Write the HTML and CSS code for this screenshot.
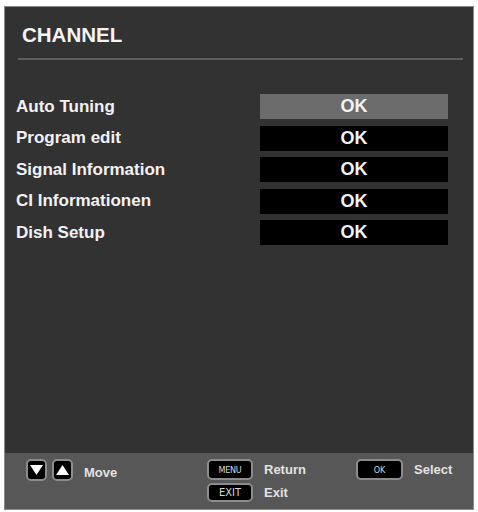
FILE: index.html
```html
<!DOCTYPE html>
<html>
<head>
<meta charset="utf-8">
<link rel="stylesheet" href="styles.css">
</head>
<body>
<div class="panel">
  <div class="title">CHANNEL</div>
  <div class="sep"></div>
  <div class="menu">
    <div class="label">Auto Tuning</div><div class="btn sel">OK</div>
    <div class="label">Program edit</div><div class="btn">OK</div>
    <div class="label">Signal Information</div><div class="btn">OK</div>
    <div class="label">CI Informationen</div><div class="btn">OK</div>
    <div class="label">Dish Setup</div><div class="btn">OK</div>
  </div>
  <div class="spacer"></div>
  <div class="footer">
    <div class="grp g1">
      <span class="key arrow"><svg width="13" height="12" viewBox="0 0 13 12"><polygon points="0,1 13,1 6.5,11" fill="#fff"/></svg></span>
      <span class="key arrow"><svg width="13" height="12" viewBox="0 0 13 12"><polygon points="0,11 13,11 6.5,1" fill="#fff"/></svg></span>
      <span class="hint move">Move</span>
    </div>
    <div class="grp g2">
      <span class="key wide k-menu">MENU</span><span class="hint">Return</span>
      <span class="key wide k-exit">EXIT</span><span class="hint">Exit</span>
    </div>
    <div class="grp g3">
      <span class="key wide k-ok">OK</span><span class="hint">Select</span>
    </div>
  </div>
</div>
</body>
</html>
```
FILE: styles.css
```css
html, body {
  margin: 0;
  padding: 0;
  background: #ffffff;
}
body {
  font-family: "Liberation Sans", Arial, sans-serif;
}
.panel {
  box-sizing: border-box;
  width: 470px;
  height: 504px;
  margin: 6px 0 0 4px;
  background: #323232;
  border: 1px solid #8a8a8a;
  display: flex;
  flex-direction: column;
}
.title {
  color: #f4f4f4;
  font-weight: bold;
  font-size: 20.5px;
  line-height: 24px;
  padding: 16px 0 0 17px;
}
.sep {
  height: 2px;
  background: #5e5e5e;
  margin: 11px 10px 0 13px;
}
.menu {
  display: grid;
  grid-template-columns: 244px 188px;
  grid-auto-rows: 25px;
  row-gap: 6.5px;
  margin: 34px 0 0 11px;
}
.label {
  color: #f2f2f2;
  font-weight: bold;
  font-size: 17px;
  line-height: 22px;
  align-self: center;
}
.btn {
  background: #000000;
  color: #f4f4f4;
  font-weight: bold;
  font-size: 18px;
  display: flex;
  align-items: center;
  justify-content: center;
}
.btn.sel {
  background: #6c6c6c;
}
.spacer {
  flex: 1;
}
.footer {
  height: 56px;
  background: #575757;
  display: flex;
  align-items: flex-start;
  padding: 6px 0 0 21px;
  box-sizing: border-box;
}
.grp {
  display: flex;
  align-items: center;
}
.g1 {
  width: 181px;
  gap: 5px;
}
.g2 {
  width: 149px;
  display: grid;
  grid-template-columns: 45px auto;
  column-gap: 12px;
  row-gap: 3px;
  align-items: center;
}
.g3 {
  gap: 11px;
}
.key {
  box-sizing: border-box;
  background: #000000;
  border: 2px solid #8c8c8c;
  border-radius: 5px;
  display: flex;
  align-items: center;
  justify-content: center;
  color: #d8d8d8;
  font-family: "DejaVu Sans Condensed", "DejaVu Sans", sans-serif;
  font-stretch: condensed;
}
.arrow {
  width: 21px;
  height: 22px;
}
.wide {
  width: 46px;
  height: 21px;
}
.k-menu {
  font-size: 9px;
  letter-spacing: -0.3px;
}
.k-exit {
  height: 19px;
  font-size: 11px;
}
.k-ok {
  width: 47px;
  font-size: 9px;
}
.hint {
  color: #e2e2e2;
  font-weight: bold;
  font-size: 13px;
}
.move {
  margin-left: 6px;
  position: relative;
  top: 2px;
}
```
